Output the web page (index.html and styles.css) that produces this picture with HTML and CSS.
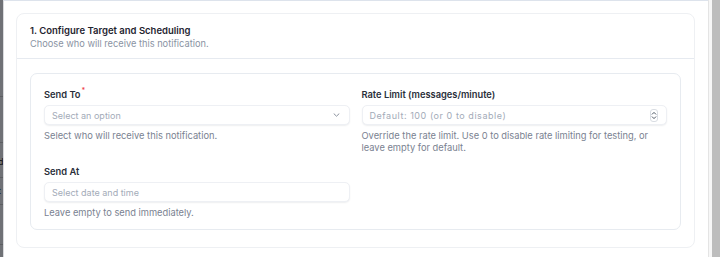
FILE: index.html
```html
<!DOCTYPE html>
<html>
<head>
<meta charset="utf-8">
<link rel="stylesheet" href="styles.css">
</head>
<body>
<div class="screen">
  <div class="backdrop">
    <div class="bd-row bd-r1"><span>i</span></div>
    <div class="bd-row bd-r2"></div>
    <div class="bd-row bd-r3"><span>d</span></div>
    <div class="bd-row bd-r4"><span>t</span></div>
    <div class="bd-row bd-r5"></div>
  </div>
  <div class="panel">
    <section class="card">
      <header class="card-head">
        <h2 class="card-title">1. Configure Target and Scheduling</h2>
        <p class="card-sub">Choose who will receive this notification.</p>
      </header>
      <div class="card-body">
        <div class="fields">
          <div class="field">
            <label class="label">Send To<span class="req">*</span></label>
            <div class="input select">
              <span class="ph">Select an option</span>
              <svg class="chev" width="7" height="4" viewBox="0 0 7 4"><path d="M1 0.8l2.5 2.4 2.5-2.4" fill="none" stroke="#8a919d" stroke-width="1" stroke-linecap="round" stroke-linejoin="round"/></svg>
            </div>
            <p class="help">Select who will receive this notification.</p>
          </div>
          <div class="field">
            <label class="label">Rate Limit (messages/minute)</label>
            <div class="input">
              <span class="ph ph-wide">Default: 100 (or 0 to disable)</span>
              <span class="spin">
                <svg width="6" height="11" viewBox="0 0 6 11"><path d="M1.2 4.2l1.8-1.8 1.8 1.8M1.2 6.8l1.8 1.8 1.8-1.8" fill="none" stroke="#4b5563" stroke-width="1" stroke-linecap="round" stroke-linejoin="round"/></svg>
              </span>
            </div>
            <p class="help">Override the rate limit. Use 0 to disable rate limiting for testing, or leave empty for default.</p>
          </div>
          <div class="field">
            <label class="label">Send At</label>
            <div class="input">
              <span class="ph">Select date and time</span>
            </div>
            <p class="help">Leave empty to send immediately.</p>
          </div>
        </div>
      </div>
    </section>
  </div>
  <div class="gutter"></div>
  <div class="scrollbar"></div>
</div>
</body>
</html>
```
FILE: styles.css
```css
* { box-sizing: border-box; }
html, body { margin: 0; padding: 0; }
body {
  width: 720px;
  height: 257px;
  overflow: hidden;
  font-family: Inter, "Noto Sans", "Liberation Sans", sans-serif;
  background: #ffffff;
}
.screen {
  display: flex;
  height: 257px;
}
.backdrop {
  width: 3px;
  flex: none;
  background: #6f7176;
  display: flex;
  flex-direction: column;
  overflow: hidden;
}
.bd-row {
  border-bottom: 1px solid #5c5e62;
  font-size: 9px;
  line-height: 10px;
  color: #111;
  display: flex;
  align-items: center;
  overflow: hidden;
}
.bd-row span { margin-left: -2px; }
.bd-r1 { height: 97px; align-items: flex-end; padding-bottom: 11px; }
.bd-r2 { height: 46px; }
.bd-r3 { height: 35px; align-items: flex-end; padding-bottom: 10px; }
.bd-r4 { height: 27px; }
.bd-r5 { height: 40px; }
.panel {
  flex: 1;
  border-left: 1px solid #d9dadd;
  border-top: 1px solid #dde3ec;
  padding: 12px 13px 0 12px;
  background: #fff;
}
.gutter {
  width: 4px;
  flex: none;
  border-left: 1px solid #e4e4e4;
  background: #f7f7f7;
}
.scrollbar {
  width: 8px;
  flex: none;
  background: #bdbdbd;
}
.card {
  border: 1px solid #eef0f3;
  border-radius: 8px;
  height: 235px;
}
.card-head {
  padding: 10px 13px 8px;
  border-bottom: 1px solid #e6eaf0;
}
.card-title {
  margin: 0;
  font-size: 9.5px;
  line-height: 13px;
  font-weight: 600;
  color: #1f2430;
}
.card-sub {
  margin: 0;
  font-size: 9.25px;
  line-height: 13px;
  color: #8a93a3;
}
.card-body {
  padding: 14px 13px 16px;
}
.fields {
  border: 1px solid #e7ebf0;
  border-radius: 7px;
  padding: 15px 13px 10px;
  display: grid;
  grid-template-columns: 1fr 1fr;
  column-gap: 12px;
  row-gap: 12px;
}
.field { display: flex; flex-direction: column; }
.label {
  display: block;
  height: 12px;
  font-size: 9.3px;
  line-height: 12px;
  font-weight: 600;
  color: #2a2f3a;
  margin-bottom: 4px;
}
.req {
  color: #ef4444;
  font-size: 7px;
  line-height: 0;
  vertical-align: 5px;
  margin-left: 1px;
}
.input {
  height: 20px;
  border: 1px solid #eef0f4;
  border-radius: 5px;
  box-shadow: 0 1px 1.5px rgba(16, 24, 40, 0.07);
  display: flex;
  align-items: center;
  padding: 0 7px;
  background: #fff;
}
.ph {
  flex: 1;
  font-size: 9px;
  color: #a3abb8;
}
.ph-wide { letter-spacing: 0.55px; }
.chev { margin-right: 2px; }
.spin {
  width: 8px;
  height: 13px;
  border: 1px solid #d9dde3;
  border-radius: 3px;
  display: flex;
  align-items: center;
  justify-content: center;
  margin-right: 1px;
}
.help {
  margin: 5px 0 0;
  font-size: 9.3px;
  line-height: 12px;
  color: #7a8291;
}
```
